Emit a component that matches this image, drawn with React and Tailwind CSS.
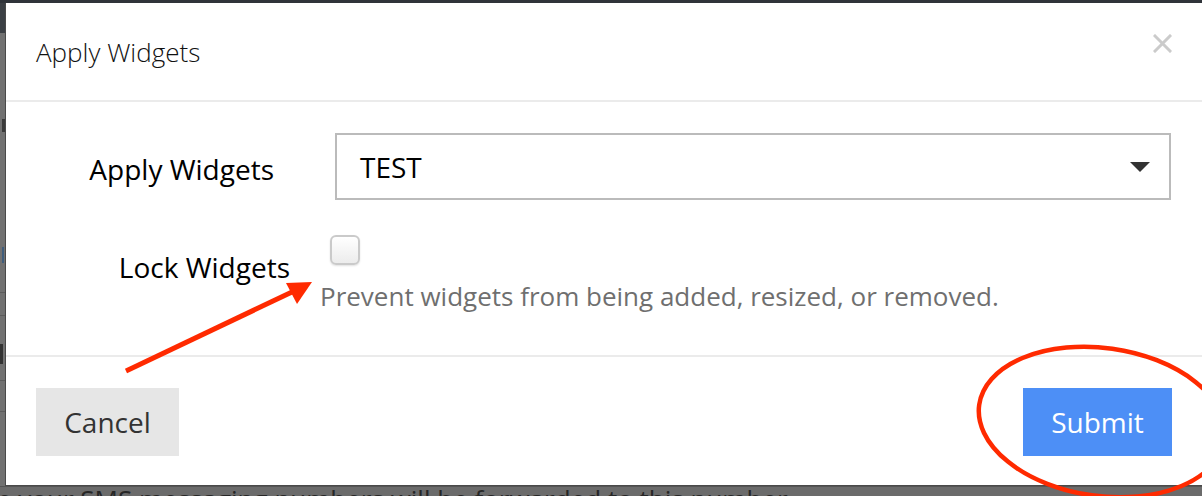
import React from 'react'

const font = { fontFamily: '"Open Sans", "Noto Sans", sans-serif' }

const CloseIcon = () => (
  <svg width="19" height="19" viewBox="0 0 19 19" className="block">
    <path d="M2 2 L17 17 M17 2 L2 17" stroke="#cbcbcb" strokeWidth="3" strokeLinecap="square" />
  </svg>
)

const Caret = () => (
  <svg width="20" height="10" viewBox="0 0 20 10" className="block">
    <path d="M0 0 H20 L10 10 Z" fill="#333" />
  </svg>
)

const Annotations = () => (
  <svg width="1202" height="496" className="absolute inset-0 pointer-events-none">
    <line x1="126" y1="371" x2="292" y2="292" stroke="#ff2a00" strokeWidth="5" />
    <path d="M312 282 L286 283 L297 304 Z" fill="#ff2a00" />
    <ellipse cx="1102" cy="422" rx="124" ry="74" transform="rotate(8 1102 422)" fill="none" stroke="#ff2a00" strokeWidth="4.5" />
  </svg>
)

const App = () => {
  return (
    <div className="relative w-[1202px] h-[496px] overflow-hidden bg-[#6e6e6e] flex flex-col" style={font}>
      <div className="h-[3px] bg-[#30343a] shrink-0" />
      <div className="flex h-[483px] shrink-0">
        {/* backdrop strip on the left */}
        <div className="w-[5px] flex flex-col bg-[#717171]">
          <div className="h-[30px] bg-[#3b3f44]" />
          <div className="h-[86px]" />
          <div className="h-[13px] w-[3px] ml-[2px] bg-[#3a3a3a]" />
          <div className="h-[115px]" />
          <div className="h-[16px] w-[3px] ml-[2px] border-l-2 border-[#3f5d7c]" />
          <div className="h-[29px]" />
          <div className="h-px bg-[#5c5c5c]" />
          <div className="h-[22px]" />
          <div className="h-px bg-[#5c5c5c]" />
          <div className="h-[28px]" />
          <div className="h-[20px] w-[3px] bg-[#333]" />
          <div className="h-[16px]" />
          <div className="h-px bg-[#5c5c5c]" />
          <div className="h-[30px]" />
          <div className="h-px bg-[#5c5c5c]" />
        </div>

        {/* modal */}
        <div className="flex-1 bg-white border-l border-b border-[#4a4a4a] flex flex-col">
          <div className="h-[99px] px-[30px] flex justify-between items-start border-b-2 border-[#ebebeb]">
            <h1 className="mt-[33px] text-[26px] leading-[32px] font-light text-[#111]">Apply Widgets</h1>
            <div className="mt-[31px]">
              <CloseIcon />
            </div>
          </div>

          <div className="pt-[31px] pb-[42px] border-b-2 border-[#ebebeb] flex flex-col gap-[35px]">
            <div className="flex items-center">
              <div className="w-[329px] pr-[61px] text-right mt-[5px] text-[28px] leading-[36px] text-black">Apply Widgets</div>
              <div className="flex-1 mr-[31px] h-[67px] border-2 border-[#bbbbbb] flex items-center justify-between pl-[23px] pr-[19px]">
                <span className="text-[28px] leading-[36px] text-black">TEST</span>
                <Caret />
              </div>
            </div>

            <div className="flex items-start">
              <div className="w-[314px] pr-[30px] pt-[14px] text-right text-[28px] leading-[36px] text-black">Lock Widgets</div>
              <div className="flex flex-col">
                <div className="ml-[10px] w-[30px] h-[30px] rounded-[6px] border-2 border-[#cacaca] bg-gradient-to-b from-white to-[#ececec] shadow-[0_1px_2px_rgba(0,0,0,0.12)]" />
                <p className="mt-[14px] text-[26px] leading-[34px] text-[#6f6f6f]">
                  Prevent widgets from being added, resized, or removed.
                </p>
              </div>
            </div>
          </div>

          <div className="flex-1 px-[30px] pt-[31px] flex justify-between items-start">
            <button className="w-[143px] h-[68px] bg-[#e6e6e6] text-[#333] text-[28px] leading-[36px]">Cancel</button>
            <button className="w-[149px] h-[68px] bg-[#4d8ff6] text-white text-[28px] leading-[36px]">Submit</button>
          </div>
        </div>
      </div>

      {/* page text showing under the backdrop */}
      <div className="h-[10px] overflow-hidden border-t border-[#555] bg-[#6b6b6b]">
        <div className="-ml-[3px] -mt-px whitespace-nowrap text-[26px] leading-[26px] text-[#262626]">
          e your SMS messaging numbers will be forwarded to this number
        </div>
      </div>

      <Annotations />
    </div>
  )
}

export default App
